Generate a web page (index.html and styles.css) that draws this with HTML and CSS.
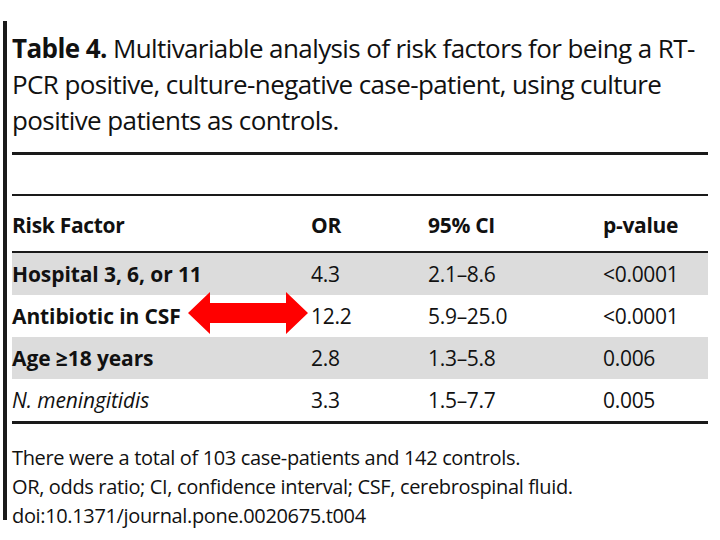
FILE: index.html
```html
<!DOCTYPE html>
<html>
<head>
<meta charset="utf-8">
<link rel="stylesheet" href="styles.css">
</head>
<body>
<div class="page">
  <div class="frame">
    <h1 class="title"><b>Table 4.</b> Multivariable analysis of risk factors for being a RT-<br>PCR positive, culture-negative case-patient, using culture<br>positive patients as controls.</h1>
    <div class="rule thick"></div>
    <div class="rule mid"></div>
    <div class="table">
      <div class="row head">
        <div>Risk Factor</div><div>OR</div><div>95% CI</div><div>p-value</div>
      </div>
      <div class="row shade">
        <div class="factor">Hospital 3, 6, or 11</div><div>4.3</div><div>2.1–8.6</div><div>&lt;0.0001</div>
      </div>
      <div class="row">
        <div class="factor">Antibiotic in CSF</div><div>12.2</div><div>5.9–25.0</div><div>&lt;0.0001</div>
      </div>
      <div class="row shade">
        <div class="factor">Age ≥18 years</div><div>2.8</div><div>1.3–5.8</div><div>0.006</div>
      </div>
      <div class="row">
        <div class="factor species">N. meningitidis</div><div>3.3</div><div>1.5–7.7</div><div>0.005</div>
      </div>
    </div>
    <div class="rule bottom"></div>
    <p class="notes">There were a total of 103 case-patients and 142 controls.<br>OR, odds ratio; CI, confidence interval; CSF, cerebrospinal fluid.<br>doi:10.1371/journal.pone.0020675.t004</p>
  </div>
  <svg class="arrow" width="124" height="46" viewBox="0 0 124 46"><polygon points="2,23 24,2 24,13 100,13 100,2 122,23 100,44 100,33 24,33 24,44" fill="#ff0000"/></svg>
</div>
</body>
</html>
```
FILE: styles.css
```css
html, body { margin: 0; padding: 0; background: #fff; }
body { font-family: "Open Sans", "Noto Sans", sans-serif; color: #111; }
.page { position: relative; width: 720px; height: 540px; overflow: hidden; }
.frame {
  margin: 21px 0 0 3px;
  height: 499px;
  border-left: 4px solid #1a1a1a;
  padding-left: 5px;
  width: 696px;
  box-sizing: content-box;
}
.title {
  margin: 0;
  padding-top: 9px;
  font-size: 26px;
  line-height: 36px;
  font-weight: 400;
  letter-spacing: -0.6px;
  white-space: nowrap;
}
.title b { font-weight: 700; }
.rule { background: #1a1a1a; }
.rule.thick { height: 3px; margin-top: 14px; }
.rule.mid { height: 2px; margin-top: 39px; }
.rule.bottom { height: 3px; }
.table { display: flex; flex-direction: column; }
.row {
  display: grid;
  grid-template-columns: 299px 117px 175px 1fr;
  height: 42px;
  align-items: center;
  font-size: 21px;
  line-height: 30px;
  letter-spacing: -0.3px;
}
.row.head {
  align-items: start;
  padding-top: 14px;
  box-sizing: border-box;
  font-weight: 700;
  border-bottom: 2px solid #1a1a1a;
  height: 57px;
}
.row.shade { background: #dcdcdc; }
.factor { font-weight: 700; letter-spacing: -0.1px; }
.factor.species { font-weight: 400; font-style: italic; letter-spacing: -0.1px; }
.notes {
  margin: 19px 0 0 0;
  font-size: 20px;
  line-height: 29px;
  letter-spacing: -0.35px;
  white-space: nowrap;
}
.arrow { position: absolute; left: 186px; top: 290px; }
```
